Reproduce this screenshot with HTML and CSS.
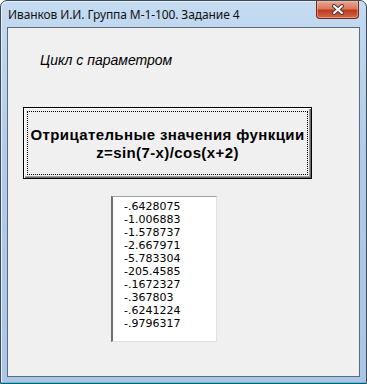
FILE: index.html
```html
<!DOCTYPE html>
<html lang="ru">
<head>
    <meta charset="UTF-8">
    <title>Задание 4</title>
    <link rel="stylesheet" href="styles.css">
</head>
<body>

<div class="window">
    <div class="title-bar">
        <span class="title">Иванков И.И. Группа М-1-100. Задание 4</span>
        <button class="close-button">
            <svg width="14" height="11" viewBox="0 0 14 11">
                <path d="M3 2 L11 9 M11 2 L3 9" stroke="#4a3a3a" stroke-width="4" stroke-linecap="round"/>
                <path d="M3 2 L11 9 M11 2 L3 9" stroke="#ffffff" stroke-width="2" stroke-linecap="round"/>
            </svg>
        </button>
    </div>

    <div class="client">
        <p class="caption">Цикл с параметром</p>

        <!-- кнопка запуска расчета -->
        <div class="run-button">
            <div class="focus-rect">
                Отрицательные значения функции<br>
                z=sin(7-x)/cos(x+2)
            </div>
        </div>

        <ul class="list-box">
            <li>-.6428075</li>
            <li>-1.006883</li>
            <li>-1.578737</li>
            <li>-2.667971</li>
            <li>-5.783304</li>
            <li>-205.4585</li>
            <li>-.1672327</li>
            <li>-.367803</li>
            <li>-.6241224</li>
            <li>-.9796317</li>
        </ul>
    </div>
</div>

</body>
</html>
```

FILE: styles.css
```css
body {
    margin: 0;
    background-color: #ffffff;
    font-family: "Liberation Sans", sans-serif;
}

.window {
    width: 367px;
    height: 384px;
    box-sizing: border-box;
    border: 1px solid #3c4a58;
    border-radius: 7px 7px 0 0;
    background: linear-gradient(to bottom, #c4dbf1 0%, #b0cce9 40%, #a9c6e6 100%);
    padding: 0 6px 6px 6px;
    box-shadow: inset 0 -1px 0 #3fd0f0, inset 1px 1px 0 #e6f0fa;
}

.title-bar {
    height: 26px;
    display: flex;
    align-items: flex-start;
    justify-content: space-between;
}
.title {
    font-family: "Noto Sans", sans-serif;
    font-size: 12px;
    color: #111;
    margin-top: 5px;
    margin-left: 1px;
    letter-spacing: -0.1px;
}
.close-button {
    width: 43px;
    height: 18px;
    margin-right: 1px;
    padding: 0;
    border: 1px solid #6e2a20;
    border-top: none;
    border-radius: 0 0 4px 4px;
    background: linear-gradient(to bottom, #e8a894 0%, #d9785c 45%, #c0391a 55%, #d06a4c 100%);
    display: flex;
    align-items: center;
    justify-content: center;
    box-shadow: inset 0 0 0 1px rgba(255, 210, 190, 0.45);
}

.client {
    height: 350px;
    box-sizing: border-box;
    border: 1px solid #5d6b78;
    background-color: #f0f0f0;
    padding: 0 0 0 15px;
}

.caption {
    margin: 24px 0 0 17px;
    font-family: "Liberation Sans", sans-serif;
    font-style: italic;
    font-size: 14px;
    color: #000;
}

.run-button {
    width: 289px;
    height: 72px;
    box-sizing: border-box;
    margin-top: 39px;
    border: 1px solid #000;
    box-shadow: inset 1px 1px 0 #ffffff, inset -1px -1px 0 #696969, inset -2px -2px 0 #a0a0a0;
    padding: 3px;
}
.focus-rect {
    height: 100%;
    box-sizing: border-box;
    border: 1px dotted #000;
    display: flex;
    align-items: center;
    justify-content: center;
    text-align: center;
    white-space: nowrap;
    font-family: "Liberation Sans", sans-serif;
    font-weight: bold;
    font-size: 15px;
    letter-spacing: 0.4px;
    line-height: 18px;
    padding-top: 1px;
    color: #000;
}

.list-box {
    list-style: none;
    width: 106px;
    height: 146px;
    box-sizing: border-box;
    margin: 17px 0 0 88px;
    padding: 3px 0 0 11px;
    background-color: #fff;
    border-top: 1px solid #a0a0a0;
    border-left: 2px solid #6e6e6e;
    border-right: 1px solid #e3e3e3;
    border-bottom: 1px solid #e3e3e3;
}
.list-box li {
    font-family: "DejaVu Sans", sans-serif;
    font-size: 11px;
    line-height: 13px;
    color: #000;
}
```
